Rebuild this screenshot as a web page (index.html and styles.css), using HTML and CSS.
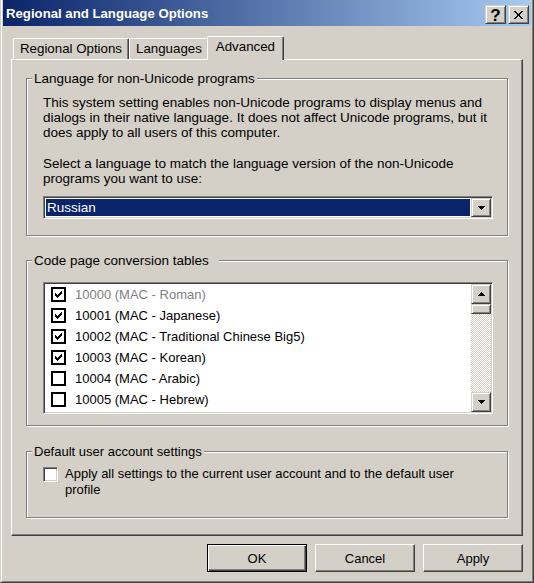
FILE: index.html
```html
<!DOCTYPE html>
<html lang="en">
<head>
<meta charset="utf-8">
<title>Regional and Language Options</title>
<link rel="stylesheet" href="styles.css">
</head>
<body>
<div class="window">
  <div class="frame">
    <div class="titlebar">
      <span class="title">Regional and Language Options</span>
      <div class="cap-btns">
        <div class="cap-btn raised-soft help">?</div>
        <div class="cap-btn raised-soft close">
          <svg width="9" height="8" viewBox="0 0 9 8" shape-rendering="crispEdges"><path fill="#000" d="M0 0h2v1H0zM7 0h2v1H7zM1 1h2v1H1zM6 1h2v1H6zM2 2h2v1H2zM5 2h2v1H5zM3 3h3v2H3zM2 5h2v1H2zM5 5h2v1H5zM1 6h2v1H1zM6 6h2v1H6zM0 7h2v1H0zM7 7h2v1H7z"/></svg>
        </div>
      </div>
    </div>
    <div class="body">
      <div class="tabs">
        <div class="tab">Regional Options</div>
        <div class="tab">Languages</div>
        <div class="tab active">Advanced</div>
      </div>
      <div class="panel">
        <fieldset class="group g1">
          <legend>Language for non-Unicode programs</legend>
          <div class="gbody gbody1">
            <p>This system setting enables non-Unicode programs to display menus and dialogs in their native language. It does not affect Unicode programs, but it does apply to all users of this computer.</p>
            <p class="last">Select a language to match the language version of the non-Unicode programs you want to use:</p>
            <div class="combo sunken">
              <div class="combo-value">Russian</div>
              <div class="combo-btn raised-soft">
                <svg width="7" height="4" viewBox="0 0 7 4" shape-rendering="crispEdges"><path fill="#000" d="M0 0h7v1H0zM1 1h5v1H1zM2 2h3v1H2zM3 3h1v1H3z"/></svg>
              </div>
            </div>
          </div>
        </fieldset>

        <fieldset class="group g2">
          <legend class="wide">Code page conversion tables</legend>
          <div class="gbody gbody2">
            <div class="listbox sunken">
              <div class="items">
                <div class="item disabled"><span class="chk"><svg width="7" height="7" viewBox="0 0 7 7" shape-rendering="crispEdges"><path fill="#000" d="M6 0h1v1H6zM5 1h2v1H5zM0 2h1v1H0zM4 2h3v1H4zM0 3h2v1H0zM3 3h3v1H3zM0 4h5v1H0zM1 5h3v1H1zM2 6h1v1H2z"/></svg></span>10000 (MAC - Roman)</div>
                <div class="item"><span class="chk"><svg width="7" height="7" viewBox="0 0 7 7" shape-rendering="crispEdges"><path fill="#000" d="M6 0h1v1H6zM5 1h2v1H5zM0 2h1v1H0zM4 2h3v1H4zM0 3h2v1H0zM3 3h3v1H3zM0 4h5v1H0zM1 5h3v1H1zM2 6h1v1H2z"/></svg></span>10001 (MAC - Japanese)</div>
                <div class="item"><span class="chk"><svg width="7" height="7" viewBox="0 0 7 7" shape-rendering="crispEdges"><path fill="#000" d="M6 0h1v1H6zM5 1h2v1H5zM0 2h1v1H0zM4 2h3v1H4zM0 3h2v1H0zM3 3h3v1H3zM0 4h5v1H0zM1 5h3v1H1zM2 6h1v1H2z"/></svg></span>10002 (MAC - Traditional Chinese Big5)</div>
                <div class="item"><span class="chk"><svg width="7" height="7" viewBox="0 0 7 7" shape-rendering="crispEdges"><path fill="#000" d="M6 0h1v1H6zM5 1h2v1H5zM0 2h1v1H0zM4 2h3v1H4zM0 3h2v1H0zM3 3h3v1H3zM0 4h5v1H0zM1 5h3v1H1zM2 6h1v1H2z"/></svg></span>10003 (MAC - Korean)</div>
                <div class="item"><span class="chk"></span>10004 (MAC - Arabic)</div>
                <div class="item"><span class="chk"></span>10005 (MAC - Hebrew)</div>
              </div>
              <div class="scrollbar">
                <div class="sb-btn raised-soft">
                  <svg width="7" height="4" viewBox="0 0 7 4" shape-rendering="crispEdges"><path fill="#000" d="M3 0h1v1H3zM2 1h3v1H2zM1 2h5v1H1zM0 3h7v1H0z"/></svg>
                </div>
                <div class="sb-thumb raised-soft"></div>
                <div class="sb-track"></div>
                <div class="sb-btn raised-soft">
                  <svg width="7" height="4" viewBox="0 0 7 4" shape-rendering="crispEdges"><path fill="#000" d="M0 0h7v1H0zM1 1h5v1H1zM2 2h3v1H2zM3 3h1v1H3z"/></svg>
                </div>
              </div>
            </div>
          </div>
        </fieldset>

        <fieldset class="group g3">
          <legend class="plain">Default user account settings</legend>
          <div class="gbody gbody3">
            <div class="option">
              <span class="chk3d sunken"></span>
              <span class="option-label">Apply all settings to the current user account and to the default user profile</span>
            </div>
          </div>
        </fieldset>
      </div>
      <div class="buttons">
        <div class="btn default">OK</div>
        <div class="btn">Cancel</div>
        <div class="btn">Apply</div>
      </div>
    </div>
  </div>
</div>
</body>
</html>
```
FILE: styles.css
```css
* { box-sizing: border-box; }
html, body { margin: 0; padding: 0; }
body {
  background: #d4d0c8;
  font: 13px/15px "Liberation Sans", Arial, sans-serif;
  color: #000;
}

.window {
  width: 534px;
  height: 583px;
  border-left: 1px solid #d4d0c8;
  border-right: 1px solid #404040;
  border-bottom: 1px solid #404040;
}
.frame {
  height: 100%;
  border-left: 1px solid #fff;
  border-right: 1px solid #808080;
  border-bottom: 1px solid #808080;
  padding: 0 1px 1px;
  display: flex;
  flex-direction: column;
}

/* title bar */
.titlebar {
  height: 26px;
  flex: none;
  display: flex;
  align-items: flex-start;
  background: linear-gradient(to right, #0a246a, #a6caf0);
  padding-right: 2px;
}
.title {
  flex: 1;
  color: #fff;
  font-weight: bold;
  font-size: 13.2px;
  line-height: 24px;
  padding: 2px 0 0 3px;
  white-space: nowrap;
}
.cap-btns { display: flex; gap: 2px; margin-top: 5px; }
.cap-btn {
  width: 21px;
  height: 19px;
  display: flex;
  align-items: center;
  justify-content: center;
}
.help {
  font-weight: bold;
  font-size: 17px;
  line-height: 1;
  padding-top: 1px;
}
.close { padding-top: 1px; }

.raised-soft {
  background: #d4d0c8;
  border: 1px solid;
  border-color: #d4d0c8 #404040 #404040 #d4d0c8;
  box-shadow: inset 1px 1px #fff, inset -1px -1px #808080;
}
.sunken {
  border: 1px solid;
  border-color: #808080 #fff #fff #808080;
  box-shadow: inset 1px 1px #404040, inset -1px -1px #d4d0c8;
  background: #fff;
}

/* body */
.body {
  flex: 1;
  padding: 10px 8px 0;
  display: flex;
  flex-direction: column;
}
.tabs {
  display: flex;
  align-items: flex-end;
  height: 23px;
  padding-left: 2px;
}
.tab {
  height: 21px;
  padding: 0 6px;
  font-size: 13.3px;
  line-height: 19px;
  border: 1px solid;
  border-bottom: 0;
  border-color: #fff #404040 transparent #fff;
  box-shadow: inset -1px 0 #808080;
  border-radius: 2px 2px 0 0;
  white-space: nowrap;
  background: #d4d0c8;
}
.tab.active {
  height: 24px;
  margin: 0 -2px -1px;
  padding: 0 8px;
  position: relative;
  z-index: 1;
}

.panel {
  height: 477px;
  flex: none;
  border: 1px solid;
  border-color: #fff #404040 #404040 #fff;
  box-shadow: inset -1px -1px #808080;
  padding: 0 14px;
}

/* group boxes */
.group {
  margin: 0;
  padding: 0;
  min-inline-size: 0;
  border: 1px solid #808080;
  box-shadow: inset 1px 1px #fff, 1px 1px #fff;
}
.group legend {
  margin-left: 5px;
  padding: 0 2px;
  font-size: 13.5px;
  line-height: 15px;
  background: #d4d0c8;
}
.group legend.plain { font-size: 13px; }
.group legend.wide { padding-right: 10px; }
.g1 { margin-top: 11px; }
.g2 { margin-top: 17px; }
.g3 { margin-top: 18px; }

.gbody1 { padding: 9px 14px 16px 16px; }
.gbody2 { padding: 14px 14px 11px 16px; }
.gbody3 { padding: 7px 14px 19px 16px; }

p { margin: 0 0 16px; font-size: 13.5px; }
p.last { margin-bottom: 10px; }

/* combo */
.combo {
  height: 23px;
  display: flex;
  padding: 1px;
}
.combo-value {
  flex: 1;
  margin: 1px;
  background: #0a246a;
  color: #fff;
  padding-left: 1px;
  font-size: 13.5px;
  line-height: 17px;
}
.combo-btn {
  width: 20px;
  display: flex;
  align-items: center;
  justify-content: center;
}

/* list box */
.listbox {
  height: 132px;
  display: flex;
  padding: 1px;
}
.items { flex: 1; }
.item {
  height: 21px;
  display: flex;
  align-items: center;
  padding-left: 6px;
  white-space: nowrap;
}
.item.disabled { color: #808080; }
.chk {
  width: 15px;
  height: 15px;
  flex: none;
  border: 2px solid #000;
  background: #fff;
  margin-right: 9px;
  display: flex;
  align-items: center;
  justify-content: center;
}
.scrollbar {
  width: 20px;
  display: flex;
  flex-direction: column;
}
.sb-btn {
  height: 20px;
  flex: none;
  display: flex;
  align-items: center;
  justify-content: center;
}
.sb-thumb { height: 10px; flex: none; }
.sb-track {
  flex: 1;
  background: repeating-conic-gradient(#fff 0 25%, #d4d0c8 0 50%) 0 0 / 2px 2px;
}

/* checkbox option */
.option {
  display: flex;
  align-items: flex-start;
  line-height: 16px;
}
.chk3d {
  width: 15px;
  height: 15px;
  flex: none;
  margin: 1px 7px 0 0;
}
.option-label { max-width: 420px; }

/* dialog buttons */
.buttons {
  display: flex;
  justify-content: flex-end;
  gap: 8px;
  margin-top: 8px;
}
.btn {
  width: 100px;
  height: 28px;
  display: flex;
  align-items: center;
  justify-content: center;
  background: #d4d0c8;
  border: 1px solid;
  border-color: #fff #404040 #404040 #fff;
  box-shadow: inset -1px -1px #808080;
}
.btn.default {
  border-color: #000;
  box-shadow: inset 1px 1px #fff, inset -1px -1px #404040, inset -2px -2px #808080;
}
```
